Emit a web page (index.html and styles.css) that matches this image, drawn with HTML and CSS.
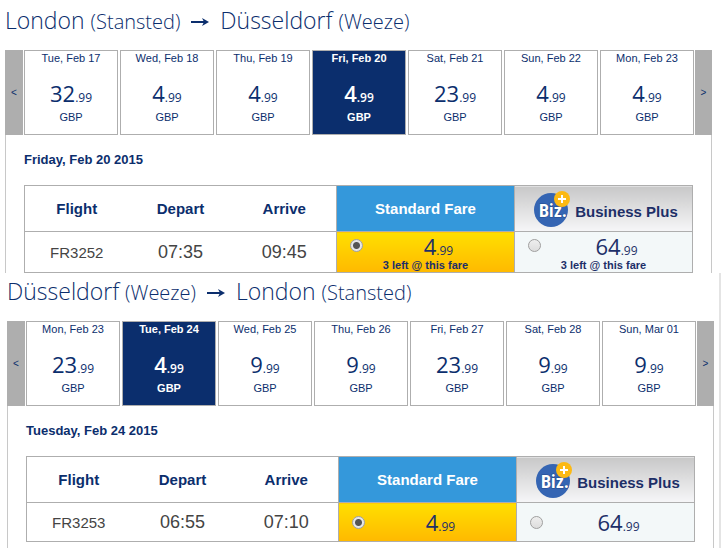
FILE: index.html
```html
<!DOCTYPE html>
<html lang="en">
<head>
    <meta charset="UTF-8">
    <meta name="viewport" content="width=device-width, initial-scale=1.0">
    <title>Select your flights</title>
    <link rel="stylesheet" href="styles.css">
</head>
<body>
    <section class="journey outbound">
        <h2 class="route">London <small>(Stansted)</small> <svg class="arrow" viewBox="0 0 18 8" aria-hidden="true"><path d="M0 4H15"/><path class="arrow-head" d="M11 0L18 4L11 8L13 4Z"/></svg> Düsseldorf <small>(Weeze)</small></h2>

        <div class="days">
            <button class="nav-btn" aria-label="Previous days">&lt;</button>
            <button class="day">Tue, Feb 17<span class="price">32<small>.99</small></span>GBP</button>
            <button class="day">Wed, Feb 18<span class="price">4<small>.99</small></span>GBP</button>
            <button class="day">Thu, Feb 19<span class="price">4<small>.99</small></span>GBP</button>
            <button class="day selected">Fri, Feb 20<span class="price">4<small>.99</small></span>GBP</button>
            <button class="day">Sat, Feb 21<span class="price">23<small>.99</small></span>GBP</button>
            <button class="day">Sun, Feb 22<span class="price">4<small>.99</small></span>GBP</button>
            <button class="day">Mon, Feb 23<span class="price">4<small>.99</small></span>GBP</button>
            <button class="nav-btn next" aria-label="Next days">&gt;</button>
        </div>

        <div class="details">
            <h3 class="date">Friday, Feb 20 2015</h3>
            <table class="flights">
                <thead>
                    <tr>
                        <th>Flight</th>
                        <th>Depart</th>
                        <th>Arrive</th>
                        <th class="fare-col standard-head">Standard Fare</th>
                        <th class="fare-col business-head">
                            <span class="business">
                                <svg class="biz-logo" viewBox="0 0 38 38" aria-hidden="true">
                                    <circle class="biz-disc" cx="18" cy="20" r="17"/>
                                    <text class="biz-text" x="6" y="27">Biz.</text>
                                    <circle class="biz-badge" cx="29" cy="9" r="8"/>
                                    <path class="biz-plus" d="M29 5V13M25 9H33"/>
                                </svg>
                                <span class="business-name">Business Plus</span>
                            </span>
                        </th>
                    </tr>
                </thead>
                <tbody>
                    <tr>
                        <td class="flight-no">FR3252</td>
                        <td>07:35</td>
                        <td>09:45</td>
                        <td class="standard">
                            <label class="fare">
                                <input type="radio" name="outbound" checked>
                                <span class="price">4<small>.99</small></span>
                            </label>
                            <div class="seats-left">3 left @ this fare</div>
                        </td>
                        <td class="plus">
                            <label class="fare">
                                <input type="radio" name="outbound">
                                <span class="price">64<small>.99</small></span>
                            </label>
                            <div class="seats-left">3 left @ this fare</div>
                        </td>
                    </tr>
                </tbody>
            </table>
        </div>
    </section>

    <section class="journey inbound">
        <h2 class="route">Düsseldorf <small>(Weeze)</small> <svg class="arrow" viewBox="0 0 18 8" aria-hidden="true"><path d="M0 4H15"/><path class="arrow-head" d="M11 0L18 4L11 8L13 4Z"/></svg> London <small>(Stansted)</small></h2>

        <div class="days">
            <button class="nav-btn" aria-label="Previous days">&lt;</button>
            <button class="day">Mon, Feb 23<span class="price">23<small>.99</small></span>GBP</button>
            <button class="day selected">Tue, Feb 24<span class="price">4<small>.99</small></span>GBP</button>
            <button class="day">Wed, Feb 25<span class="price">9<small>.99</small></span>GBP</button>
            <button class="day">Thu, Feb 26<span class="price">9<small>.99</small></span>GBP</button>
            <button class="day">Fri, Feb 27<span class="price">23<small>.99</small></span>GBP</button>
            <button class="day">Sat, Feb 28<span class="price">9<small>.99</small></span>GBP</button>
            <button class="day">Sun, Mar 01<span class="price">9<small>.99</small></span>GBP</button>
            <button class="nav-btn next" aria-label="Next days">&gt;</button>
        </div>

        <div class="details">
            <h3 class="date">Tuesday, Feb 24 2015</h3>
            <table class="flights">
                <thead>
                    <tr>
                        <th>Flight</th>
                        <th>Depart</th>
                        <th>Arrive</th>
                        <th class="fare-col standard-head">Standard Fare</th>
                        <th class="fare-col business-head">
                            <span class="business">
                                <svg class="biz-logo" viewBox="0 0 38 38" aria-hidden="true">
                                    <circle class="biz-disc" cx="18" cy="20" r="17"/>
                                    <text class="biz-text" x="6" y="27">Biz.</text>
                                    <circle class="biz-badge" cx="29" cy="9" r="8"/>
                                    <path class="biz-plus" d="M29 5V13M25 9H33"/>
                                </svg>
                                <span class="business-name">Business Plus</span>
                            </span>
                        </th>
                    </tr>
                </thead>
                <tbody>
                    <tr>
                        <td class="flight-no">FR3253</td>
                        <td>06:55</td>
                        <td>07:10</td>
                        <td class="standard">
                            <label class="fare">
                                <input type="radio" name="inbound" checked>
                                <span class="price">4<small>.99</small></span>
                            </label>
                        </td>
                        <td class="plus">
                            <label class="fare">
                                <input type="radio" name="inbound">
                                <span class="price">64<small>.99</small></span>
                            </label>
                        </td>
                    </tr>
                </tbody>
            </table>
        </div>
    </section>
</body>
</html>
```
FILE: styles.css
```css
* {
    box-sizing: border-box;
}
body {
    margin: 0;
    background: #fff;
    color: #0b2e6d;
    font-family: "Liberation Sans", Arial, sans-serif;
    font-size: 11px;
}
.outbound {
    padding: 0 9px 0 5px;
}
.inbound {
    padding: 0 5px 0 7px;
    border-right: 2px solid #e4e4e4;
}

/* Route heading */
.route {
    margin: 0;
    padding-top: 4px;
    height: 50px;
    font-family: "Open Sans", sans-serif;
    font-size: 23px;
    font-weight: 300;
    line-height: 32px;
    white-space: nowrap;
}
.inbound .route {
    height: 48px;
    padding-top: 2px;
}
.route small {
    font-size: 20px;
}
.arrow {
    width: 18px;
    height: 8px;
    margin: 0 5px;
    vertical-align: 3px;
    fill: none;
    stroke: #0b2e6d;
    stroke-width: 2;
}
.arrow-head {
    fill: #0b2e6d;
    stroke: none;
}

/* Day picker */
.days {
    display: flex;
    height: 85px;
}
button {
    padding: 0;
    border: none;
    color: inherit;
    font: inherit;
    cursor: pointer;
}
.nav-btn {
    width: 18px;
    background: #aeaeae;
    font-size: 10px;
}
.nav-btn.next {
    width: 17px;
}
.day {
    display: flex;
    flex: 1;
    flex-direction: column;
    align-items: center;
    margin: 0 1px;
    border: 1px solid #aeaeae;
    background: #fff;
    line-height: 14px;
}
.day .price {
    margin: 13px 0 2px;
}
.day.selected {
    background: #0b2e6d;
    color: #fff;
    font-weight: bold;
}
.price {
    font-family: "Open Sans", sans-serif;
    font-size: 22px;
    line-height: 30px;
}
.selected .price {
    font-weight: 600;
}
.price small {
    font-size: 12px;
    line-height: 12px;
}

/* Flight table */
.details {
    padding: 16px 18px 0;
    border: solid #c8c8c8;
    border-width: 0 1px;
}
.inbound .details {
    padding-bottom: 6px;
}
.date {
    margin: 0 0 17px;
    font-size: 13px;
    line-height: 17px;
}
.flights {
    width: 100%;
    border: 1px solid #aeaeae;
    border-collapse: collapse;
    table-layout: fixed;
}
.flights th,
.flights td {
    padding: 0;
    text-align: center;
}
.flights th {
    height: 46px;
    border-bottom: 1px solid #aeaeae;
    font-size: 15px;
}
.flights td {
    height: 41px;
    color: #444;
    font-size: 18px;
}
.inbound td {
    height: 39px;
}
.flights .flight-no {
    font-size: 15px;
}
.flights .fare-col {
    width: 178px;
}
.flights .standard-head {
    border-left: 1px solid #aeaeae;
    background: #3498db;
    color: #fff;
}
.flights .business-head {
    border-left: 1px solid #aeaeae;
    background: linear-gradient(#c8c8c8, #f6f6f8);
    color: #1d2f68;
}
.flights .standard,
.flights .plus {
    border-left: 1px solid #aeaeae;
    color: #1d2f68;
}
.flights .standard {
    background: linear-gradient(#ffdf00, #ffb900);
}
.flights .plus {
    background: #f3f8f9;
}
.business {
    display: flex;
    align-items: center;
    justify-content: center;
    gap: 4px;
    padding-left: 4px;
}
.business-name {
    padding-top: 5px;
}
.biz-logo {
    width: 38px;
    height: 38px;
}
.biz-disc {
    fill: #3565b3;
}
.biz-text {
    fill: #fff;
    stroke: #254a8c;
    stroke-width: 1;
    paint-order: stroke;
    font-family: "Liberation Sans Narrow", "Roboto Condensed", "Liberation Sans", sans-serif;
    font-size: 18px;
    font-weight: bold;
}
.biz-badge {
    fill: #fcb913;
}
.biz-plus {
    fill: none;
    stroke: #fff;
    stroke-width: 2;
}

/* Fare cells */
.fare {
    display: flex;
    align-items: center;
    padding-left: 13px;
}
.fare .price {
    flex: 1;
    line-height: 26px;
}
.fare input {
    appearance: none;
    width: 13px;
    height: 13px;
    margin: 0;
    border: 1px solid #a0a0a0;
    border-radius: 50%;
    background: linear-gradient(#eee, #ddd);
}
.fare input:checked {
    background: radial-gradient(circle, #555 0 3px, #e6e6e6 4px);
}
.seats-left {
    font-size: 11px;
    font-weight: bold;
    line-height: 13px;
}
```
